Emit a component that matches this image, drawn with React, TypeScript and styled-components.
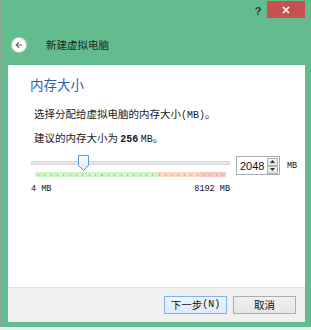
import styled, { createGlobalStyle } from 'styled-components';

const GlobalStyle = createGlobalStyle`
  html, body {
    margin: 0;
    padding: 0;
    background: #eeeeee;
  }
  body {
    width: 311px;
    height: 330px;
    overflow: hidden;
  }
`;

const cjk = `"Noto Sans CJK SC", "Noto Sans", sans-serif`;
const mono = `"Liberation Mono", "DejaVu Sans Mono", monospace`;

const Window = styled.div`
  width: 311px;
  height: 327px;
  box-sizing: border-box;
  background: #63bb8e;
  border-left: 2px solid #8fa498;
  padding: 0 6px 5px 6px;
  display: flex;
  flex-direction: column;
  font-family: ${cjk};
`;

const TitleBar = styled.div`
  height: 19px;
  display: flex;
  justify-content: flex-end;
  align-items: flex-start;
`;

const HelpButton = styled.div`
  width: 14px;
  height: 18px;
  margin-right: 2px;
  font: bold 11px "Liberation Sans", sans-serif;
  color: #2b3a32;
  line-height: 22px;
  text-align: center;
`;

const CloseButton = styled.div`
  width: 38px;
  height: 17px;
  margin-top: 1px;
  background: #c75050;
  display: flex;
  align-items: center;
  justify-content: center;
`;

const Header = styled.div`
  height: 46px;
  box-sizing: border-box;
  padding: 6px 0 0 4px;
  display: flex;
  align-items: center;
`;

const BackButton = styled.div`
  width: 14px;
  height: 14px;
  border-radius: 50%;
  background: #fff;
  box-shadow: 0 0 0 1px #b8cbbf;
  display: flex;
  align-items: center;
  justify-content: center;
`;

const Caption = styled.div`
  margin-left: 20px;
  font-size: 10.5px;
  line-height: 14px;
  color: #1c2a22;
`;

const Panel = styled.div`
  flex: 1;
  background: #fff;
  display: flex;
  flex-direction: column;
`;

const Content = styled.div`
  flex: 1;
  padding: 10px 0 0 22px;
`;

const Heading = styled.div`
  font-size: 13.5px;
  line-height: 18px;
  color: #2f62ad;
  margin-bottom: 14px;
`;

const Text = styled.div`
  font-size: 10.5px;
  line-height: 14px;
  color: #1a1a1a;
  padding-left: 4px;
  margin-bottom: 8px;
`;

const Mono = styled.span<{ $bold?: boolean }>`
  font-family: ${mono};
  font-size: 10px;
  font-weight: ${(p) => (p.$bold ? 'bold' : 'normal')};
`;

const SliderRow = styled.div`
  display: flex;
  align-items: flex-start;
  margin-top: 1px;
  padding-left: 1px;
`;

const SliderCol = styled.div`
  width: 199px;
  display: flex;
  flex-direction: column;
`;

const Track = styled.div`
  position: relative;
  height: 16px;
  display: flex;
  align-items: center;
`;

const TrackLine = styled.div`
  flex: 1;
  height: 2px;
  background: #e6e6e6;
  border: 1px solid #d8d8d8;
`;

const Thumb = styled.svg`
  position: absolute;
  top: 0;
`;

const Ticks = styled.div`
  margin: 1px 4px 0 4px;
  height: 5px;
  background:
    repeating-linear-gradient(to right, #a9bca6 0 1px, transparent 1px 6.35px) 3px 50% / 100% 2px no-repeat,
    linear-gradient(to right, #ccf6c2 0 122px, #fcd6c2 122px 165px, #fbc6c6 165px);
`;

const Scale = styled.div`
  display: flex;
  justify-content: space-between;
  margin-top: 6px;
  font-family: ${mono};
  font-size: 8.5px;
  line-height: 12px;
  color: #111;
`;

const SpinBox = styled.div`
  margin: 1px 0 0 6px;
  width: 44px;
  height: 19px;
  box-sizing: border-box;
  border: 1px solid #abadb3;
  display: flex;
  align-items: center;
  padding-left: 3px;
  font: 11px "Liberation Sans", Arial, sans-serif;
  color: #111;
`;

const SpinValue = styled.span`
  flex: 1;
`;

const SpinButtons = styled.div`
  width: 11px;
  height: 16px;
  margin-right: 1px;
  display: flex;
  flex-direction: column;
`;

const SpinButton = styled.div`
  flex: 1;
  box-sizing: border-box;
  border: 1px solid #b5b5b5;
  background: linear-gradient(#f2f2f2, #e2e2e2);
  display: flex;
  align-items: center;
  justify-content: center;
`;

const Unit = styled.div`
  margin: 5px 0 0 7px;
  font-family: ${mono};
  font-size: 8.5px;
  line-height: 12px;
  color: #111;
`;

const Footer = styled.div`
  height: 35px;
  box-sizing: border-box;
  border-top: 1px solid #dfdfdf;
  background: #f0f0f0;
  display: flex;
  justify-content: flex-end;
  align-items: center;
  gap: 6px;
  padding: 0 9px 1px 0;
`;

const Button = styled.div<{ $primary?: boolean }>`
  width: 63px;
  height: 18px;
  box-sizing: border-box;
  border: 1px solid ${(p) => (p.$primary ? '#7eb4ea' : '#adadad')};
  background: ${(p) => (p.$primary ? 'linear-gradient(#ecf4fc, #dcecfc)' : 'linear-gradient(#f0f0f0, #e5e5e5)')};
  display: flex;
  align-items: center;
  justify-content: center;
  font-size: 10.5px;
  color: #111;
`;

const Arrow = ({ up }: { up?: boolean }) => (
  <svg width="5" height="3" viewBox="0 0 5 3">
    <path d={up ? 'M0 3 L2.5 0 L5 3 Z' : 'M0 0 L2.5 3 L5 0 Z'} fill="#333" />
  </svg>
);

export default function App() {
  const value = 2048;
  const max = 8192;
  const trackWidth = 199;
  const thumbLeft = 6 + ((value - 4) / (max - 4)) * (trackWidth - 12) - 5.5;

  return (
    <>
      <GlobalStyle />
      <Window>
        <TitleBar>
          <HelpButton>?</HelpButton>
          <CloseButton>
            <svg width="8" height="8" viewBox="0 0 8 8">
              <path d="M1 1 L7 7 M7 1 L1 7" stroke="#fff" strokeWidth="1.6" />
            </svg>
          </CloseButton>
        </TitleBar>
        <Header>
          <BackButton>
            <svg width="10" height="10" viewBox="0 0 10 10">
              <path d="M8 5 H2.5 M5 2.2 L2.2 5 L5 7.8" stroke="#666" strokeWidth="1.2" fill="none" />
            </svg>
          </BackButton>
          <Caption>新建虚拟电脑</Caption>
        </Header>
        <Panel>
          <Content>
            <Heading>内存大小</Heading>
            <Text>
              选择分配给虚拟电脑的内存大小<Mono>(MB)</Mono>。
            </Text>
            <Text>
              建议的内存大小为 <Mono $bold>256</Mono> <Mono>MB</Mono>。
            </Text>
            <SliderRow>
              <SliderCol>
                <Track>
                  <TrackLine />
                  <Thumb width="11" height="16" viewBox="0 0 11 16" style={{ left: thumbLeft }}>
                    <defs>
                      <linearGradient id="tg" x1="0" y1="0" x2="0" y2="1">
                        <stop offset="0" stopColor="#fafcfe" />
                        <stop offset="1" stopColor="#dfe8f2" />
                      </linearGradient>
                    </defs>
                    <path d="M0.5 0.5 H10.5 V10.5 L5.5 15.5 L0.5 10.5 Z" fill="url(#tg)" stroke="#5a9ae0" />
                  </Thumb>
                </Track>
                <Ticks />
                <Scale>
                  <span>4 MB</span>
                  <span>8192 MB</span>
                </Scale>
              </SliderCol>
              <SpinBox>
                <SpinValue>{value}</SpinValue>
                <SpinButtons>
                  <SpinButton>
                    <Arrow up />
                  </SpinButton>
                  <SpinButton>
                    <Arrow />
                  </SpinButton>
                </SpinButtons>
              </SpinBox>
              <Unit>MB</Unit>
            </SliderRow>
          </Content>
          <Footer>
            <Button $primary>
              下一步<Mono>(N)</Mono>
            </Button>
            <Button>取消</Button>
          </Footer>
        </Panel>
      </Window>
    </>
  );
}
